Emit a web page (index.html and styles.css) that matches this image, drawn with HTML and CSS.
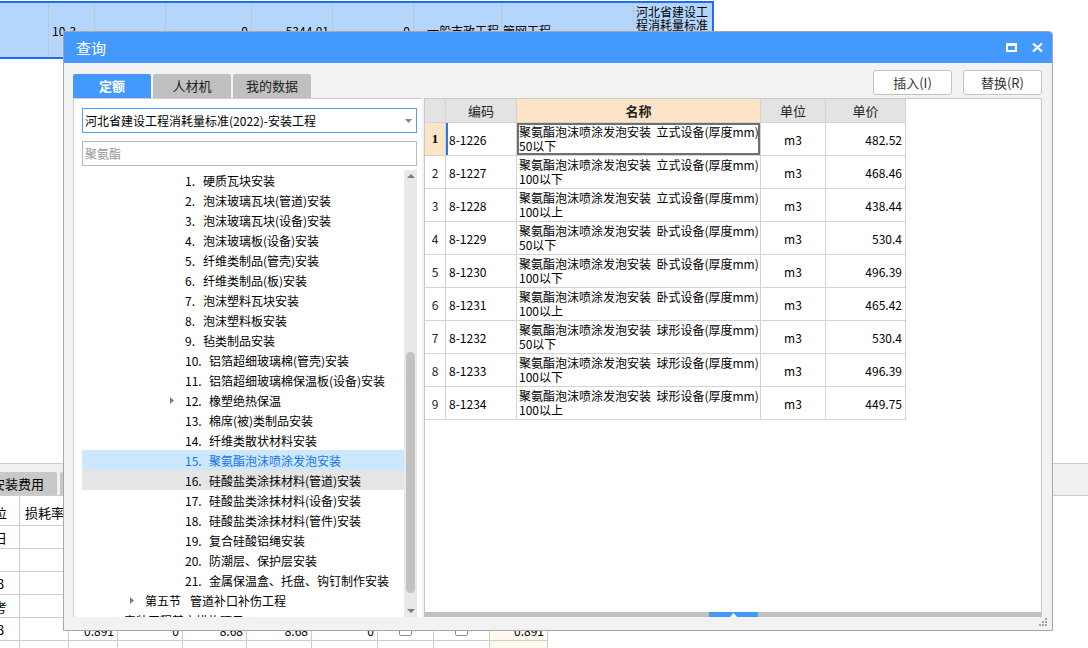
FILE: index.html
```html
<!DOCTYPE html>
<html lang="zh-CN">
<head>
<meta charset="utf-8">
<title>查询</title>
<link rel="stylesheet" href="styles.css">
</head>
<body>
<div class="desk">
  <div class="bg-top">
    <div class="bgc"></div>
    <div class="bgc">10-3</div>
    <div class="bgc"></div>
    <div class="bgc num">0</div>
    <div class="bgc num">5344.01</div>
    <div class="bgc num">0</div>
    <div class="bgc c7">一般市政工程</div>
    <div class="bgc c8">管网工程</div>
    <div class="bgc last">河北省建设工程消耗量标准(2022)-市政工程</div>
  </div>

  <div class="bg-bottom">
    <div class="bb-tabs">
      <div class="bb-tab first"><span>安装费用</span></div>
      <div class="bb-tab second"></div>
    </div>
    <div class="bb-row head">
      <div><span class="cut">位</span></div><div class="hd">损耗率</div><div></div><div></div><div></div><div></div><div></div><div></div><div></div><div></div>
    </div>
    <div class="bb-row">
      <div><span class="cut">日</span></div><div></div><div></div><div></div><div></div><div></div><div></div><div></div><div></div><div class="cream"></div>
    </div>
    <div class="bb-row">
      <div></div><div></div><div></div><div></div><div></div><div></div><div></div><div></div><div></div><div class="cream"></div>
    </div>
    <div class="bb-row">
      <div><span class="cut d">3</span></div><div></div><div></div><div></div><div></div><div></div><div></div><div></div><div></div><div class="cream"></div>
    </div>
    <div class="bb-row">
      <div><span class="cut">考</span></div><div></div><div></div><div></div><div></div><div></div><div></div><div></div><div></div><div class="cream"></div>
    </div>
    <div class="bb-row">
      <div><span class="cut d">3</span></div><div></div><div class="v">0.891</div><div class="v">0</div><div class="v">8.68</div><div class="v">8.68</div><div class="v">0</div><div class="ck"><span class="cb"></span></div><div class="ck"><span class="cb"></span></div><div class="v cream">0.891</div>
    </div>
    <div class="bb-row">
      <div></div><div></div><div></div><div></div><div></div><div></div><div></div><div></div><div></div><div class="cream"></div>
    </div>
  </div>
</div>

<div class="dialog">
  <div class="titlebar">
    <span class="title">查询</span>
    <div class="win-btns">
      <svg width="11" height="9" viewBox="0 0 11 9"><path d="M0 0H11V9H0Z M2 3H9V7H2Z" fill="#fff" fill-rule="evenodd"/></svg>
      <svg width="11" height="9" viewBox="0 0 11 9"><path d="M1 0.5L10 8.5M10 0.5L1 8.5" stroke="#fff" stroke-width="2.2"/></svg>
    </div>
  </div>
  <div class="dbody">
    <div class="toolbar">
      <div class="tabs">
        <div class="tab active">定额</div>
        <div class="tab">人材机</div>
        <div class="tab">我的数据</div>
      </div>
      <div class="actions">
        <button class="btn">插入(I)</button>
        <button class="btn">替换(R)</button>
      </div>
    </div>

    <div class="content">
      <div class="left">
        <div class="select">
          <span>河北省建设工程消耗量标准(2022)-安装工程</span>
          <svg width="7" height="4" viewBox="0 0 7 4"><path d="M0 0H7L3.5 4Z" fill="#8a8a8a"/></svg>
        </div>
        <div class="search">聚氨酯</div>
        <div class="tree-wrap">
          <div class="tree">
            <div class="tr l2"><span class="ar"></span><span class="no">1.</span>硬质瓦块安装</div>
            <div class="tr l2"><span class="ar"></span><span class="no">2.</span>泡沫玻璃瓦块(管道)安装</div>
            <div class="tr l2"><span class="ar"></span><span class="no">3.</span>泡沫玻璃瓦块(设备)安装</div>
            <div class="tr l2"><span class="ar"></span><span class="no">4.</span>泡沫玻璃板(设备)安装</div>
            <div class="tr l2"><span class="ar"></span><span class="no">5.</span>纤维类制品(管壳)安装</div>
            <div class="tr l2"><span class="ar"></span><span class="no">6.</span>纤维类制品(板)安装</div>
            <div class="tr l2"><span class="ar"></span><span class="no">7.</span>泡沫塑料瓦块安装</div>
            <div class="tr l2"><span class="ar"></span><span class="no">8.</span>泡沫塑料板安装</div>
            <div class="tr l2"><span class="ar"></span><span class="no">9.</span>毡类制品安装</div>
            <div class="tr l2"><span class="ar"></span><span class="no n2">10.</span>铝箔超细玻璃棉(管壳)安装</div>
            <div class="tr l2"><span class="ar"></span><span class="no n2">11.</span>铝箔超细玻璃棉保温板(设备)安装</div>
            <div class="tr l2"><span class="ar"><svg width="4" height="7" viewBox="0 0 4 7"><path d="M0 0L4 3.5L0 7Z" fill="#808080"/></svg></span><span class="no n2">12.</span>橡塑绝热保温</div>
            <div class="tr l2"><span class="ar"></span><span class="no n2">13.</span>棉席(被)类制品安装</div>
            <div class="tr l2"><span class="ar"></span><span class="no n2">14.</span>纤维类散状材料安装</div>
            <div class="tr l2 sel"><span class="ar"></span><span class="no n2">15.</span>聚氨酯泡沫喷涂发泡安装</div>
            <div class="tr l2 hov"><span class="ar"></span><span class="no n2">16.</span>硅酸盐类涂抹材料(管道)安装</div>
            <div class="tr l2"><span class="ar"></span><span class="no n2">17.</span>硅酸盐类涂抹材料(设备)安装</div>
            <div class="tr l2"><span class="ar"></span><span class="no n2">18.</span>硅酸盐类涂抹材料(管件)安装</div>
            <div class="tr l2"><span class="ar"></span><span class="no n2">19.</span>复合硅酸铝绳安装</div>
            <div class="tr l2"><span class="ar"></span><span class="no n2">20.</span>防潮层、保护层安装</div>
            <div class="tr l2"><span class="ar"></span><span class="no n2">21.</span>金属保温盒、托盘、钩钉制作安装</div>
            <div class="tr l1"><span class="ar"><svg width="4" height="7" viewBox="0 0 4 7"><path d="M0 0L4 3.5L0 7Z" fill="#808080"/></svg></span>第五节<span class="sp"></span>管道补口补伤工程</div>
            <div class="tr l0"><span class="ar"></span>安装工程其它措施项目</div>
          </div>
          <div class="vscroll">
            <div class="arr"><svg width="8" height="4" viewBox="0 0 8 4"><path d="M0 4L4 0L8 4Z" fill="#7c7c7c"/></svg></div>
            <div class="thumb"></div>
            <div class="arr down"><svg width="8" height="4" viewBox="0 0 8 4"><path d="M0 0H8L4 4Z" fill="#7c7c7c"/></svg></div>
          </div>
        </div>
      </div>

      <div class="right">
        <div class="grid-area">
          <div class="row head">
            <div class="c"></div>
            <div class="c h">编码</div>
            <div class="c h hn">名称</div>
            <div class="c h">单位</div>
            <div class="c h">单价</div>
          </div>
          <div class="row">
            <div class="c rn cur">1</div>
            <div class="c code curcode">8-1226</div>
            <div class="c name curname">聚氨酯泡沫喷涂发泡安装&nbsp;&nbsp;立式设备(厚度mm)<br>50以下</div>
            <div class="c unit">m3</div>
            <div class="c price">482.52</div>
          </div>
          <div class="row">
            <div class="c rn">2</div>
            <div class="c code">8-1227</div>
            <div class="c name">聚氨酯泡沫喷涂发泡安装&nbsp;&nbsp;立式设备(厚度mm)<br>100以下</div>
            <div class="c unit">m3</div>
            <div class="c price">468.46</div>
          </div>
          <div class="row">
            <div class="c rn">3</div>
            <div class="c code">8-1228</div>
            <div class="c name">聚氨酯泡沫喷涂发泡安装&nbsp;&nbsp;立式设备(厚度mm)<br>100以上</div>
            <div class="c unit">m3</div>
            <div class="c price">438.44</div>
          </div>
          <div class="row">
            <div class="c rn">4</div>
            <div class="c code">8-1229</div>
            <div class="c name">聚氨酯泡沫喷涂发泡安装&nbsp;&nbsp;卧式设备(厚度mm)<br>50以下</div>
            <div class="c unit">m3</div>
            <div class="c price">530.4</div>
          </div>
          <div class="row">
            <div class="c rn">5</div>
            <div class="c code">8-1230</div>
            <div class="c name">聚氨酯泡沫喷涂发泡安装&nbsp;&nbsp;卧式设备(厚度mm)<br>100以下</div>
            <div class="c unit">m3</div>
            <div class="c price">496.39</div>
          </div>
          <div class="row">
            <div class="c rn">6</div>
            <div class="c code">8-1231</div>
            <div class="c name">聚氨酯泡沫喷涂发泡安装&nbsp;&nbsp;卧式设备(厚度mm)<br>100以上</div>
            <div class="c unit">m3</div>
            <div class="c price">465.42</div>
          </div>
          <div class="row">
            <div class="c rn">7</div>
            <div class="c code">8-1232</div>
            <div class="c name">聚氨酯泡沫喷涂发泡安装&nbsp;&nbsp;球形设备(厚度mm)<br>50以下</div>
            <div class="c unit">m3</div>
            <div class="c price">530.4</div>
          </div>
          <div class="row">
            <div class="c rn">8</div>
            <div class="c code">8-1233</div>
            <div class="c name">聚氨酯泡沫喷涂发泡安装&nbsp;&nbsp;球形设备(厚度mm)<br>100以下</div>
            <div class="c unit">m3</div>
            <div class="c price">496.39</div>
          </div>
          <div class="row">
            <div class="c rn">9</div>
            <div class="c code">8-1234</div>
            <div class="c name">聚氨酯泡沫喷涂发泡安装&nbsp;&nbsp;球形设备(厚度mm)<br>100以上</div>
            <div class="c unit">m3</div>
            <div class="c price">449.75</div>
          </div>
        </div>
        <div class="hscroll"><div class="hthumb"><svg width="7" height="4" viewBox="0 0 7 4"><path d="M0 4L3.5 0L7 4Z" fill="#fff"/></svg></div></div>
      </div>
    </div>

    <div class="footer">
      <svg width="9" height="9" viewBox="0 0 9 9">
        <rect x="6" y="0" width="2" height="2" fill="#a3a3a3"/>
        <rect x="3" y="3" width="2" height="2" fill="#a3a3a3"/>
        <rect x="6" y="3" width="2" height="2" fill="#a3a3a3"/>
        <rect x="0" y="6" width="2" height="2" fill="#a3a3a3"/>
        <rect x="3" y="6" width="2" height="2" fill="#a3a3a3"/>
        <rect x="6" y="6" width="2" height="2" fill="#a3a3a3"/>
      </svg>
    </div>
  </div>
</div>
</body>
</html>
```

FILE: styles.css
```css
* { box-sizing: border-box; }

html, body {
  margin: 0;
  padding: 0;
}

body {
  width: 1088px;
  height: 648px;
  overflow: hidden;
  position: relative;
  background: #fff;
  font-family: "Noto Sans CJK SC", "Noto Sans", sans-serif;
  font-size: 12px;
  color: #000;
}

/* ---------- background application ---------- */
.desk {
  height: 648px;
  display: flex;
  flex-direction: column;
}

.bg-top {
  margin-top: 1px;
  width: 714px;
  height: 62px;
  display: grid;
  grid-template-columns: 49px 46px 71px 86px 81px 81px 88px 132px 78px;
  background: #b4d6fd;
  border-top: 2px solid #1f6cf6;
  border-bottom: 2px solid #1f6cf6;
  border-right: 2px solid #1f6cf6;
}

.bgc {
  border-right: 1px solid #c0c6cf;
  display: flex;
  align-items: center;
  padding: 1px 3px 0 3px;
  line-height: 14px;
  white-space: nowrap;
  overflow: hidden;
}

.bgc.num { justify-content: flex-end; }
.bgc.c7 { padding-left: 13px; }
.bgc.c8 { padding-left: 1px; }

.bgc.last {
  border-right: none;
  align-items: flex-start;
  white-space: normal;
  padding: 2px 2px 0 2px;
  line-height: 13px;
}

.bg-bottom {
  margin-top: 404px;
  flex: none;
}

.bb-tabs {
  height: 33px;
  border-top: 1px solid #cdcdcd;
  border-bottom: 1px solid #cdcdcd;
  background: #f0f0f0;
  display: flex;
  align-items: flex-end;
  gap: 3px;
}

.bb-tab {
  height: 23px;
  background: #c8c8c8;
  border-radius: 0 2px 0 0;
  overflow: hidden;
  font-size: 13px;
  line-height: 23px;
  white-space: nowrap;
}

.bb-tab.first { width: 57px; }
.bb-tab.first span { margin-left: -8px; }
.bb-tab.second { width: 80px; border-radius: 2px 2px 0 0; }

.bb-row {
  display: grid;
  grid-template-columns: 20px 49px 49px 65px 64px 65px 66px 56px 56px 58px;
  width: 548px;
  height: 23px;
  border-bottom: 1px solid #cdcdcd;
}

.bb-row.head { height: 30px; }

.bb-row > div {
  border-right: 1px solid #cdcdcd;
  overflow: hidden;
  white-space: nowrap;
  display: flex;
  align-items: center;
  font-size: 13px;
}

.bb-row.head > div { padding-top: 3px; }

.bb-row .hd { padding-left: 5px; }
.bb-row .cut { margin-left: -6px; }
.bb-row .cut.d { margin-left: -3px; }

.bb-row .v {
  justify-content: flex-end;
  padding-right: 3px;
  padding-top: 2px;
  font-size: 12px;
}

.bb-row .ck { justify-content: center; }
.bb-row .cream { background: #fffaf0; }

.cb {
  width: 13px;
  height: 13px;
  border: 1px solid #8e8e8e;
  border-radius: 2px;
  background: #fff;
}

/* ---------- dialog window ---------- */
.dialog {
  position: absolute;
  left: 63px;
  top: 31px;
  width: 990px;
  height: 600px;
  border: 1px solid #a6a6a6;
  border-radius: 0 4px 0 0;
  background: #f2f2f2;
  display: flex;
  flex-direction: column;
  overflow: hidden;
}

.titlebar {
  height: 31px;
  flex: none;
  background: #4499ff;
  color: #fff;
  display: flex;
  align-items: center;
  justify-content: space-between;
  padding: 0 9px 0 12px;
}

.title {
  font-size: 15px;
  line-height: 20px;
}

.win-btns {
  display: flex;
  align-items: center;
  gap: 15px;
}

.win-btns svg { display: block; }

.dbody {
  flex: 1;
  display: flex;
  flex-direction: column;
}

.toolbar {
  height: 35px;
  flex: none;
  display: flex;
  justify-content: space-between;
  align-items: flex-end;
  padding: 0 10px 0 9px;
}

.tabs {
  display: flex;
  gap: 2px;
}

.tab {
  width: 78px;
  height: 24px;
  line-height: 24px;
  text-align: center;
  font-size: 13px;
  background: #c0c0c0;
  color: #222;
  border-radius: 2px 2px 0 0;
}

.tab.active {
  background: #4499ff;
  color: #fff;
  font-weight: bold;
}

.actions {
  display: flex;
  gap: 11px;
  margin-bottom: 3px;
}

.btn {
  width: 79px;
  height: 25px;
  padding: 0;
  background: #fff;
  border: 1px solid #c3c3c3;
  border-radius: 3px;
  font-family: "Noto Sans CJK SC", "Noto Sans", sans-serif;
  font-size: 13px;
  color: #333;
}

.content {
  height: 519px;
  flex: none;
  display: flex;
  gap: 2px;
  padding: 0 10px 0 9px;
}

/* left panel */
.left {
  width: 349px;
  flex: none;
  background: #fff;
  border-left: 1px solid #cfcfcf;
  border-top: 1px solid #cfcfcf;
  padding: 9px 5px 0 8px;
  display: flex;
  flex-direction: column;
}

.select {
  height: 25px;
  flex: none;
  border: 1px solid #4f9ef8;
  display: flex;
  align-items: center;
  justify-content: space-between;
  padding: 0 4px 0 2px;
  white-space: nowrap;
}

.search {
  height: 25px;
  flex: none;
  margin-top: 8px;
  border: 1px solid #b9b9b9;
  color: #9a9a9a;
  display: flex;
  align-items: center;
  padding-left: 2px;
}

.tree-wrap {
  margin-top: 4px;
  flex: 1;
  display: flex;
  overflow: hidden;
}

.tree {
  flex: 1;
  overflow: hidden;
}

.tr {
  height: 20px;
  display: flex;
  align-items: center;
  white-space: nowrap;
}

.tr.l2 { padding-left: 88px; }
.tr.l1 { padding-left: 48px; }
.tr.l0 { padding-left: 27px; }

.tr.sel { background: #cce8ff; color: #1b74e4; }
.tr.hov { background: #e5e5e5; }

.ar {
  width: 15px;
  flex: none;
  display: flex;
  align-items: center;
}

.ar svg { display: block; }

.no {
  width: 18px;
  flex: none;
}

.no.n2 { width: 24px; }

.sp {
  display: inline-block;
  width: 9px;
}

.vscroll {
  width: 13px;
  flex: none;
  background: #e9e9e9;
  display: flex;
  flex-direction: column;
  align-items: center;
}

.arr {
  height: 12px;
  flex: none;
  display: flex;
  align-items: center;
  justify-content: center;
}

.arr svg { display: block; }
.arr.down { margin-top: auto; }

.thumb {
  margin-top: 170px;
  width: 9px;
  height: 241px;
  border-radius: 5px;
  background: #c2c2c2;
}

/* right panel */
.right {
  flex: 1;
  background: #fff;
  border: 1px solid #c8c8c8;
  border-bottom: none;
  display: flex;
  flex-direction: column;
}

.grid-area {
  flex: 1;
  overflow: hidden;
}

.row {
  display: grid;
  grid-template-columns: 21px 71px 244px 65px 80px;
  width: 481px;
  height: 33px;
}

.row.head {
  height: 24px;
  background: #e3e3e3;
}

.c {
  border-right: 1px solid #d3d3d3;
  border-bottom: 1px solid #d3d3d3;
  display: flex;
  align-items: center;
  white-space: nowrap;
  overflow: hidden;
}

.c.h {
  justify-content: center;
  font-size: 13px;
  color: #222;
}

.c.hn {
  background: #fde4c6;
  font-weight: bold;
}

.c.rn {
  justify-content: center;
  color: #222;
}

.c.rn.cur {
  background: #fde4c6;
  font-family: "Liberation Serif", serif;
  font-weight: bold;
  font-size: 13px;
  color: #000;
}

.c.code { padding-left: 3px; }
.c.curcode { box-shadow: inset 2px 0 0 #2a7ae4; }

.c.name {
  flex-direction: column;
  align-items: flex-start;
  justify-content: center;
  padding-left: 2px;
  line-height: 14px;
}

.c.curname { box-shadow: inset 0 0 0 2px #6f6f6f; }

.c.unit { justify-content: center; }

.c.price {
  justify-content: flex-end;
  padding-right: 3px;
}

.hscroll {
  height: 5px;
  flex: none;
  background: #c0c0c0;
  display: flex;
}

.hthumb {
  margin-left: 284px;
  width: 49px;
  height: 5px;
  background: #4499ff;
  display: flex;
  align-items: center;
  justify-content: center;
}

.hthumb svg { display: block; }

.footer {
  flex: 1;
  display: flex;
  justify-content: flex-end;
  align-items: flex-start;
  padding: 1px 4px 0 0;
}

.footer svg { display: block; }
```
